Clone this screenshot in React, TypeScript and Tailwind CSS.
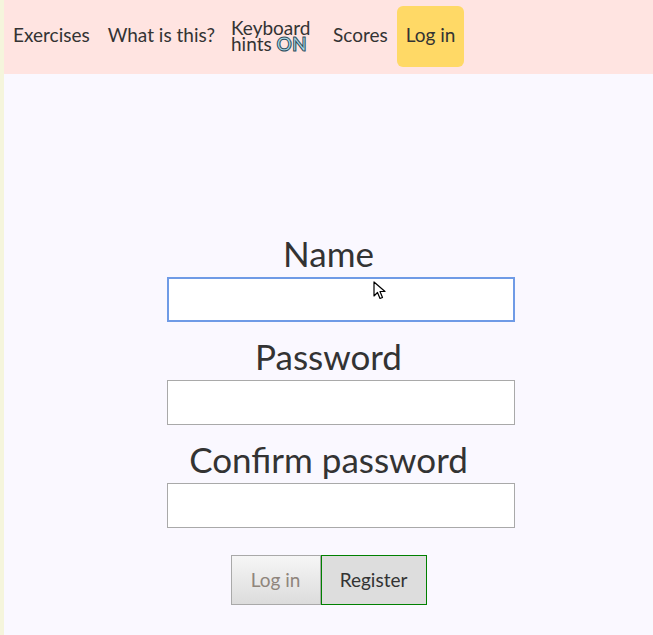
import React from "react";

const navItems = ["Exercises", "What is this?"];

function Cursor() {
  return (
    <svg
      className="pointer-events-none absolute left-[373px] top-[281px]"
      width="14"
      height="20"
      viewBox="0 0 14 20"
    >
      <path
        d="M1 1 L1 15 L4.5 11.5 L7 17.5 L9.5 16.5 L7 10.5 L12 10.5 Z"
        fill="#fff"
        stroke="#000"
        strokeWidth="1.2"
        strokeLinejoin="round"
      />
    </svg>
  );
}

export default function App() {
  return (
    <div className="relative flex min-h-[635px] bg-[#f5f5dc] font-['Lato',sans-serif] text-[#333]">
      <div className="ml-[4px] flex flex-1 flex-col bg-[#faf8ff]">
        <nav className="flex h-[74px] items-center bg-[#ffe4e1] pb-[2px] text-[19px]">
          {navItems.map((item) => (
            <span key={item} className="px-[9px] pb-[2px]">
              {item}
            </span>
          ))}
          <span className="w-[100px] px-[9px] pl-[7px] leading-[16px]">
            Keyboard hints{" "}
            <span className="font-bold text-[#a8d8e6] [-webkit-text-stroke:1px_#2f4f5f]">ON</span>
          </span>
          <span className="px-[9px] pb-[2px]">Scores</span>
          <span className="flex h-[61px] items-center rounded-md bg-[#ffd966] px-[9px] pb-[2px]">
            Log in
          </span>
        </nav>

        <main className="flex flex-col items-center pt-[155px]">
          <label className="text-[35px] leading-[48px]">Name</label>
          <input className="ml-[24px] h-[45px] w-[348px] border-2 border-[#6f9be6] bg-white outline-none" />
          <label className="mt-[10px] text-[35px] leading-[48px]">Password</label>
          <input className="ml-[24px] h-[45px] w-[348px] border border-[#a9a9a9] bg-white outline-none" />
          <label className="mt-[10px] text-[35px] leading-[48px]">Confirm password</label>
          <input className="ml-[24px] h-[45px] w-[348px] border border-[#a9a9a9] bg-white outline-none" />
          <div className="mt-[27px] flex">
            <button className="h-[50px] w-[90px] border border-[#a9a9a9] bg-gradient-to-b from-[#f6f6f6] to-[#dcdcdc] text-[19px] text-[#8f857c]">
              Log in
            </button>
            <button className="h-[50px] w-[106px] border border-[#008000] bg-[#dddddd] text-[19px] text-[#333]">
              Register
            </button>
          </div>
        </main>
      </div>
      <Cursor />
    </div>
  );
}
